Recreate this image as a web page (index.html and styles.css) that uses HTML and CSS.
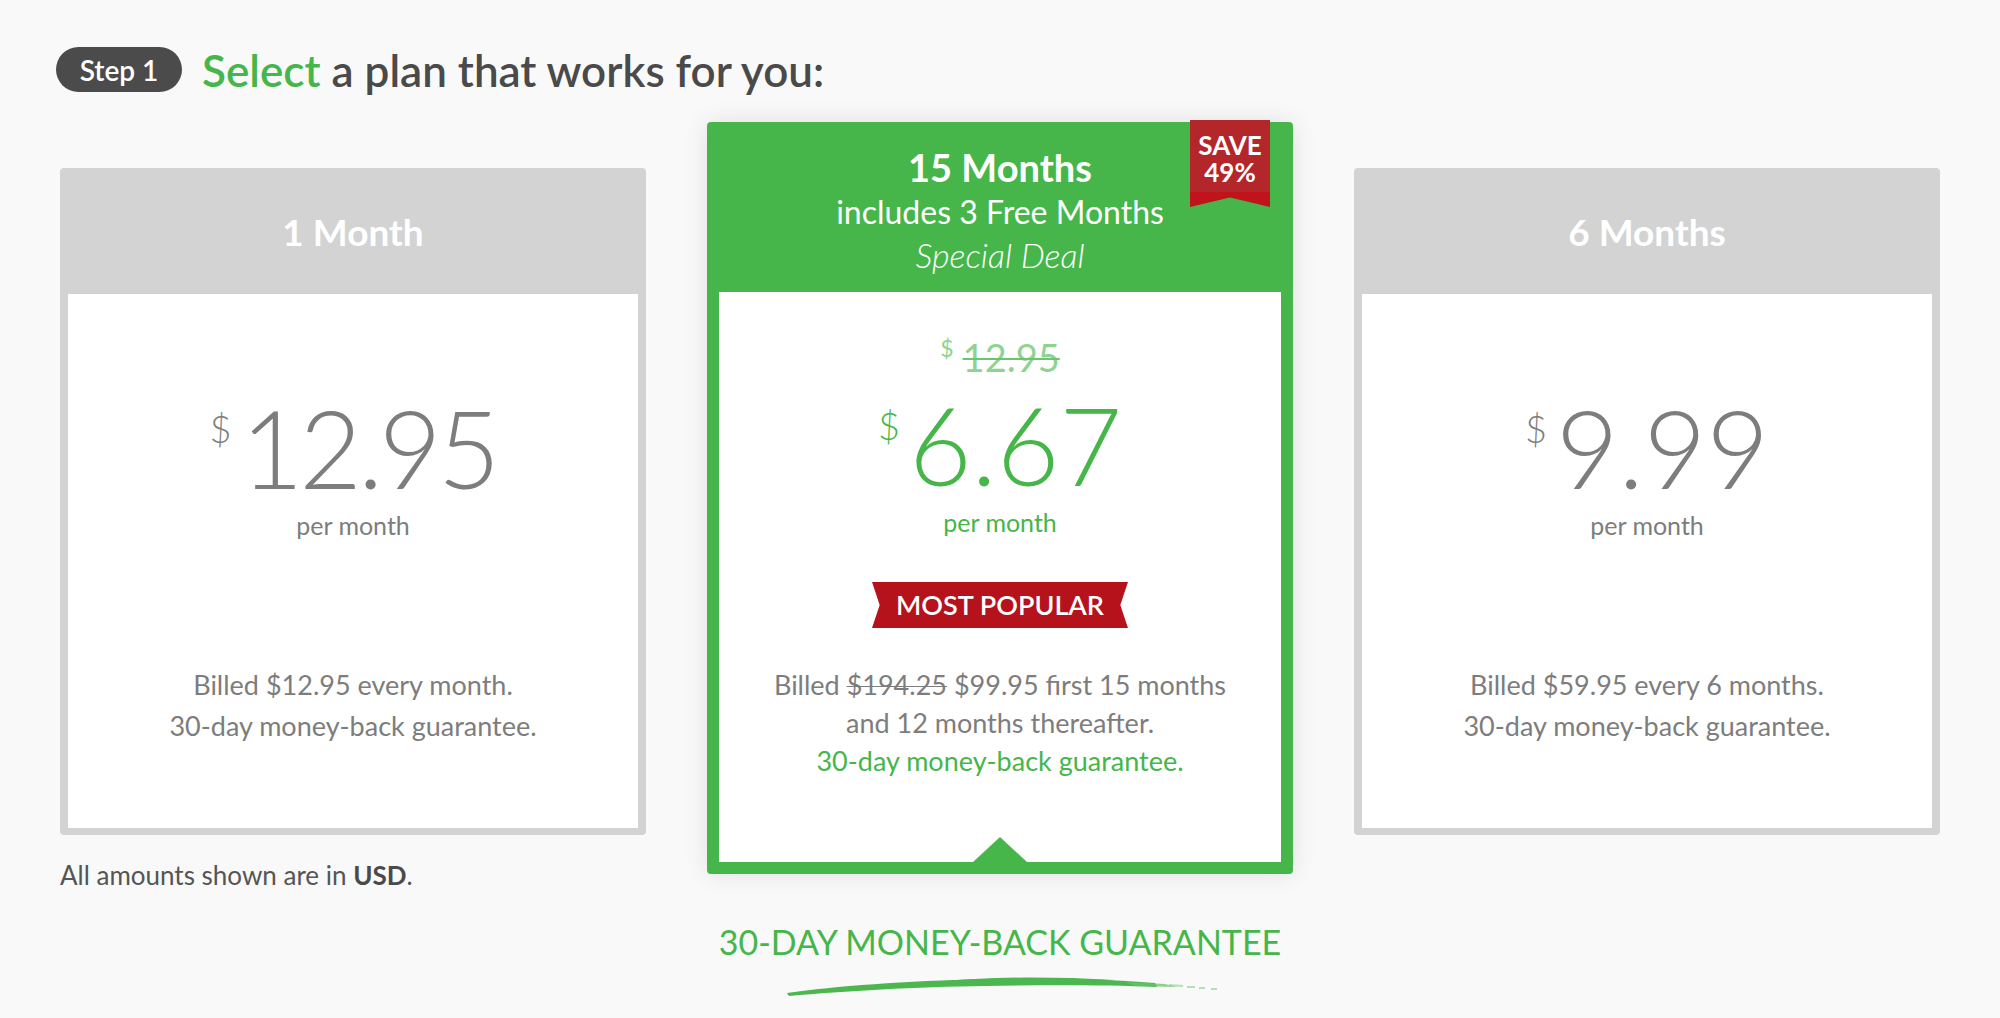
FILE: index.html
```html
<!DOCTYPE html>
<html lang="en">
<head>
<meta charset="utf-8">
<title>Select a plan</title>
<link rel="stylesheet" href="styles.css">
</head>
<body>
<div class="page">
  <div class="step-row">
    <span class="step-pill">Step 1</span>
    <h1 class="step-title"><span class="green">Select</span> a plan that works for you:</h1>
  </div>

  <div class="plans">
    <div class="plan-col">
      <div class="plan plan-side">
        <div class="plan-head"><h2 class="plan-name">1 Month</h2></div>
        <div class="plan-body">
          <div class="price"><span class="cur">$</span><span class="amount amount-tight">12.95</span></div>
          <div class="per">per month</div>
          <div class="billing">
            <div>Billed $12.95 every month.</div>
            <div>30-day money-back guarantee.</div>
          </div>
        </div>
      </div>
      <p class="usd">All amounts shown are in <b>USD</b>.</p>
    </div>

    <div class="plan-col">
      <div class="plan plan-featured">
        <div class="save-ribbon"><span class="save-text">SAVE 49%</span></div>
        <div class="feat-head">
          <h2 class="feat-name">15 Months</h2>
          <div class="feat-sub">includes 3 Free Months</div>
          <div class="feat-deal">Special Deal</div>
        </div>
        <div class="feat-body">
          <div class="old-price"><span class="old-cur">$</span><s class="old-amount">12.95</s></div>
          <div class="price price-green"><span class="cur">$</span><span class="amount">6.67</span></div>
          <div class="per per-green">per month</div>
          <div class="popular">MOST POPULAR</div>
          <div class="feat-billing">
            <div>Billed <s>$194.25</s> $99.95 first 15 months</div>
            <div>and 12 months thereafter.</div>
            <div class="green">30-day money-back guarantee.</div>
          </div>
          <span class="pointer"></span>
        </div>
      </div>
      <div class="guarantee">
        <div class="guarantee-text">30-DAY MONEY-BACK GUARANTEE</div>
        <svg class="brush" width="440" height="22" viewBox="0 0 440 22" aria-hidden="true">
          <path d="M2 19 C 50 12, 120 7, 200 5 C 260 3, 320 5, 370 9 L 372 13 C 320 11, 260 11, 200 12 C 130 13, 60 17, 4 22 Z" fill="#4cb74f"/>
          <path d="M150 8 C 200 3, 260 2, 330 6 L 300 8 C 250 6, 200 7, 150 10 Z" fill="#4cb74f"/>
          <path d="M340 8 L 380 10 L 392 13 L 350 12 Z" fill="#69c26c" opacity="0.75"/>
          <path d="M384 11 L 398 12 M402 13 L 410 13 M414 14 L 420 14 M426 15 L 432 15" stroke="#86cf88" stroke-width="2" fill="none" opacity="0.6"/>
        </svg>
      </div>
    </div>

    <div class="plan-col">
      <div class="plan plan-side">
        <div class="plan-head"><h2 class="plan-name">6 Months</h2></div>
        <div class="plan-body">
          <div class="price"><span class="cur">$</span><span class="amount">9.99</span></div>
          <div class="per">per month</div>
          <div class="billing">
            <div>Billed $59.95 every 6 months.</div>
            <div>30-day money-back guarantee.</div>
          </div>
        </div>
      </div>
    </div>
  </div>
</div>
</body>
</html>
```

FILE: styles.css
```css
* { box-sizing: border-box; }

html, body {
  margin: 0;
  padding: 0;
  background: #f9f9f9;
  font-family: "Lato", "Open Sans", Arial, sans-serif;
  color: #7a7a7a;
}

.page {
  padding: 47px 60px 0 56px;
}

.green { color: #46b64a; }

/* Step header */
.step-row {
  display: flex;
  align-items: center;
  gap: 20px;
  height: 45px;
}

.step-pill {
  display: inline-flex;
  align-items: center;
  justify-content: center;
  width: 126px;
  height: 45px;
  border-radius: 23px;
  background: #4b4b4b;
  color: #fff;
  font-size: 28px;
  font-weight: 600;
}

.step-title {
  margin: 0;
  font-size: 44px;
  font-weight: 600;
  color: #4a4a4a;
}

/* Plans row */
.plans {
  display: flex;
  align-items: flex-start;
  gap: 61px;
  margin-top: 30px;
  padding-left: 4px;
}

.plan-col {
  width: 586px;
  flex: none;
}

.plan {
  position: relative;
  border-radius: 4px;
}

.plan-side {
  margin-top: 46px;
  background: #d3d3d3;
  padding: 0 8px 7px;
}

.plan-head {
  height: 126px;
  display: flex;
  align-items: center;
  justify-content: center;
}

.plan-name {
  margin: 0;
  color: #fff;
  font-size: 37px;
  font-weight: 700;
}

.plan-body {
  background: #fff;
  height: 534px;
  padding-top: 99px;
  text-align: center;
}

.price {
  display: flex;
  justify-content: center;
  align-items: flex-start;
  line-height: 1;
  color: #7d7d7d;
}

.cur {
  font-size: 38px;
  font-weight: 300;
  margin-top: 16px;
  margin-right: 9px;
}

.amount {
  font-size: 108px;
  font-weight: 300;
}

.amount-tight {
  letter-spacing: -4px;
}

.per {
  margin-top: 9px;
  font-size: 25px;
  line-height: 30px;
  color: #7d7d7d;
}

.billing {
  margin-top: 124px;
  font-size: 27px;
  line-height: 41px;
  color: #7d7d7d;
}

/* Featured */
.plan-featured {
  background: #46b64a;
  padding: 0 12px 12px;
  box-shadow: 0 0 24px rgba(0, 0, 0, 0.10);
}

.save-ribbon {
  position: absolute;
  top: -2px;
  right: 23px;
  width: 80px;
  height: 87px;
  background: linear-gradient(#b3262a 0, #b3262a 72px, #c0131b 72px);
  clip-path: polygon(0 0, 100% 0, 100% 100%, 50% 89%, 0 100%);
  display: flex;
  justify-content: center;
  padding-top: 12px;
}

.save-text {
  display: block;
  width: 70px;
  text-align: center;
  color: #fff;
  font-size: 26px;
  font-weight: 700;
  line-height: 27px;
}

.feat-head {
  height: 170px;
  padding-top: 22px;
  text-align: center;
  color: #fff;
}

.feat-name {
  margin: 0;
  font-size: 38px;
  font-weight: 700;
  line-height: 46px;
}

.feat-sub {
  font-size: 32px;
  line-height: 44px;
}

.feat-deal {
  font-size: 34px;
  font-style: italic;
  font-weight: 300;
  line-height: 42px;
}

.feat-body {
  position: relative;
  background: #fff;
  height: 570px;
  padding-top: 45px;
  text-align: center;
}

.old-price {
  display: flex;
  justify-content: center;
  align-items: flex-start;
  line-height: 40px;
  color: #8fd392;
}

.old-cur {
  font-size: 23px;
  line-height: 23px;
  margin-top: 0;
  margin-right: 9px;
}

.old-amount {
  font-size: 38px;
  font-weight: 400;
  text-decoration-thickness: 2px;
  text-decoration-color: #6cc46f;
}

.price-green {
  margin-top: 13px;
  color: #46b64a;
}

.per-green {
  margin-top: 9px;
  color: #46b64a;
}

.popular {
  width: 256px;
  height: 46px;
  margin: 45px auto 0;
  background: #b5121b;
  clip-path: polygon(0 0, 100% 0, 97% 50%, 100% 100%, 0 100%, 3% 50%);
  color: #fff;
  font-size: 27px;
  font-weight: 600;
  line-height: 46px;
}

.feat-billing {
  margin-top: 38px;
  font-size: 27px;
  line-height: 38px;
  color: #7d7d7d;
}

.feat-billing s {
  text-decoration-thickness: 1px;
}

.pointer {
  position: absolute;
  left: 50%;
  bottom: 0;
  transform: translateX(-50%);
  width: 0;
  height: 0;
  border-left: 27px solid transparent;
  border-right: 27px solid transparent;
  border-bottom: 25px solid #46b64a;
}

/* Under cards */
.usd {
  margin: 24px 0 0;
  font-size: 26px;
  color: #555;
}

.usd b { color: #4a4a4a; }

.guarantee {
  margin-top: 48px;
  display: flex;
  flex-direction: column;
  align-items: center;
}

.guarantee-text {
  font-size: 34px;
  font-weight: 400;
  color: #46b64a;
  line-height: 40px;
}

.brush {
  display: block;
  margin-top: 12px;
  margin-left: 10px;
}
```
